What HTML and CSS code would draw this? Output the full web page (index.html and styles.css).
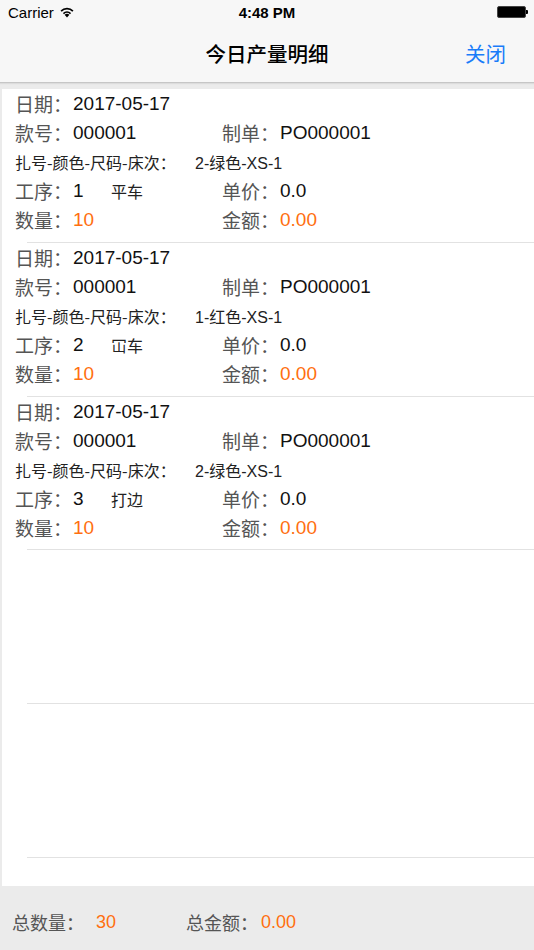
FILE: index.html
```html
<!DOCTYPE html>
<html>
<head>
<meta charset="utf-8">
<link rel="stylesheet" href="styles.css">
</head>
<body>
<div class="screen">
  <div class="top">
    <div class="status">
      <div class="carrier">Carrier
        <svg class="wifi" width="16" height="12" viewBox="0 0 16 12">
          <path d="M8 11.5 L5.6 8.8 A3.6 3.6 0 0 1 10.4 8.8 Z" fill="#000"/>
          <path d="M3.9 7 A5.9 5.9 0 0 1 12.1 7 L11 8.2 A4.3 4.3 0 0 0 5 8.2 Z" fill="#000"/>
          <path d="M1.5 4.4 A9.2 9.2 0 0 1 14.5 4.4 L13.3 5.7 A7.5 7.5 0 0 0 2.7 5.7 Z" fill="#000"/>
        </svg>
      </div>
      <div class="time">4:48 PM</div>
      <div class="battery"><span class="cell"></span><span class="nub"></span></div>
    </div>
    <div class="nav">
      <div class="title">今日产量明细</div>
      <div class="close">关闭</div>
    </div>
  </div>
  <div class="content">
    <div class="list">
      <div class="item">
        <div class="row"><span class="lbl">日期：</span><span class="val">2017-05-17</span></div>
        <div class="row"><div class="col"><span class="lbl">款号：</span><span class="val">000001</span></div><div class="col"><span class="lbl">制单：</span><span class="val">PO000001</span></div></div>
        <div class="row small"><span class="dark">扎号-颜色-尺码-床次：</span><span class="val2">2-绿色-XS-1</span></div>
        <div class="row"><div class="col"><span class="lbl">工序：</span><span class="val num">1</span><span class="proc">平车</span></div><div class="col"><span class="lbl">单价：</span><span class="val">0.0</span></div></div>
        <div class="row"><div class="col"><span class="lbl">数量：</span><span class="org">10</span></div><div class="col"><span class="lbl">金额：</span><span class="org">0.00</span></div></div>
      </div>
      <div class="item">
        <div class="row"><span class="lbl">日期：</span><span class="val">2017-05-17</span></div>
        <div class="row"><div class="col"><span class="lbl">款号：</span><span class="val">000001</span></div><div class="col"><span class="lbl">制单：</span><span class="val">PO000001</span></div></div>
        <div class="row small"><span class="dark">扎号-颜色-尺码-床次：</span><span class="val2">1-红色-XS-1</span></div>
        <div class="row"><div class="col"><span class="lbl">工序：</span><span class="val num">2</span><span class="proc">冚车</span></div><div class="col"><span class="lbl">单价：</span><span class="val">0.0</span></div></div>
        <div class="row"><div class="col"><span class="lbl">数量：</span><span class="org">10</span></div><div class="col"><span class="lbl">金额：</span><span class="org">0.00</span></div></div>
      </div>
      <div class="item">
        <div class="row"><span class="lbl">日期：</span><span class="val">2017-05-17</span></div>
        <div class="row"><div class="col"><span class="lbl">款号：</span><span class="val">000001</span></div><div class="col"><span class="lbl">制单：</span><span class="val">PO000001</span></div></div>
        <div class="row small"><span class="dark">扎号-颜色-尺码-床次：</span><span class="val2">2-绿色-XS-1</span></div>
        <div class="row"><div class="col"><span class="lbl">工序：</span><span class="val num">3</span><span class="proc">打边</span></div><div class="col"><span class="lbl">单价：</span><span class="val">0.0</span></div></div>
        <div class="row"><div class="col"><span class="lbl">数量：</span><span class="org">10</span></div><div class="col"><span class="lbl">金额：</span><span class="org">0.00</span></div></div>
      </div>
      <div class="item empty"></div>
      <div class="item empty"></div>
    </div>
  </div>
  <div class="footer">
    <span class="flbl">总数量：</span><span class="fval qty">30</span>
    <span class="flbl amt">总金额：</span><span class="fval">0.00</span>
  </div>
</div>
</body>
</html>
```

FILE: styles.css
```css
* { box-sizing: border-box; }
html, body { margin: 0; padding: 0; }
body {
  width: 534px;
  height: 950px;
  overflow: hidden;
  background: #ebebeb;
  font-family: "Liberation Sans", "Noto Sans CJK SC", sans-serif;
}
.screen {
  display: flex;
  flex-direction: column;
  height: 950px;
}
.top {
  background: #f7f7f7;
  border-bottom: 1px solid #c6c6c6;
  box-shadow: 0 1px 1px #dcdcdc;
  height: 83px;
  flex: none;
}
.status {
  height: 24px;
  display: flex;
  align-items: center;
  justify-content: space-between;
  padding: 0 6px 0 8px;
  font-size: 15px;
  color: #000;
  position: relative;
}
.carrier { display: flex; align-items: center; gap: 5px; }
.wifi { margin-top: -1px; }
.time {
  position: absolute;
  left: 0; right: 0;
  text-align: center;
  font-weight: bold;
  pointer-events: none;
}
.battery { display: flex; align-items: center; }
.battery .cell {
  width: 29px; height: 12px;
  background: #000;
  border-radius: 2px;
  border: 1px solid #444;
}
.battery .nub {
  width: 2px; height: 4px; background: #000; border-radius: 0 1px 1px 0;
}
.nav {
  height: 58px;
  display: flex;
  align-items: center;
  justify-content: center;
  position: relative;
}
.title {
  font-family: "Noto Sans CJK SC", sans-serif;
  font-size: 20.5px;
  font-weight: 500;
  color: #000;
}
.close {
  position: absolute;
  right: 28px;
  top: 0;
  bottom: 0;
  display: flex;
  align-items: center;
  font-family: "Noto Sans CJK SC", sans-serif;
  font-size: 20.5px;
  color: #1a7cf9;
}
.content {
  flex: none;
  height: 797px;
  margin: 6px 0 0 2px;
  background: #fff;
  overflow: hidden;
}
.item {
  height: 154px;
  position: relative;
}
.item::after {
  content: "";
  position: absolute;
  left: 25px; right: 0; bottom: 0;
  height: 1px;
  background: #e2e2e2;
}
.item:nth-child(3) { height: 153px; }
.row {
  height: 29px;
  display: flex;
  align-items: center;
  padding-left: 13px;
  font-size: 19px;
  white-space: nowrap;
}
.col { display: flex; align-items: center; }
.col:first-child { width: 207px; }
.lbl {
  font-family: "Noto Sans CJK SC", sans-serif;
  color: #555;
  font-size: 19px;
  width: 58px;
  flex: none;
}
.val { color: #111; }
.num { width: 38px; }
.proc {
  font-family: "Noto Sans CJK SC", sans-serif;
  font-size: 16px;
  color: #222;
}
.org { color: #ff6f0f; }
.small { font-size: 16px; }
.dark {
  font-family: "Noto Sans CJK SC", sans-serif;
  font-size: 16px;
  color: #222;
  width: 180px;
  flex: none;
}
.val2 { color: #222; font-size: 16px; }
.footer {
  flex: 1;
  display: flex;
  align-items: center;
  padding: 8px 0 0 12px;
  font-size: 18px;
}
.flbl {
  font-family: "Noto Sans CJK SC", sans-serif;
  color: #555;
  font-size: 18px;
}
.fval { color: #ff6f0f; }
.qty { margin-left: 12px; width: 90px; }
.amt { margin-right: 3px; }
```
